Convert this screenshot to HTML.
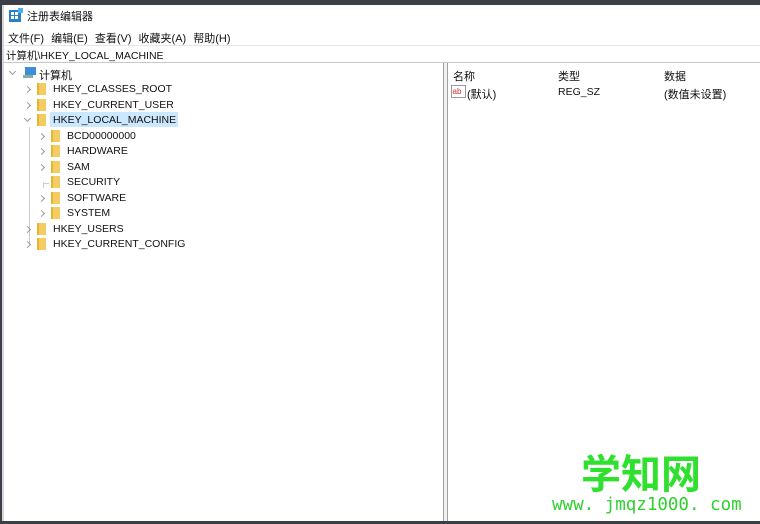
<!DOCTYPE html>
<html><head><meta charset="utf-8"><style>
*{margin:0;padding:0;box-sizing:border-box}
body{width:760px;height:524px;overflow:hidden;background:#fff;position:relative;font-family:"Liberation Sans","Noto Sans CJK SC",sans-serif;font-size:11px;color:#111}
.a{position:absolute;white-space:nowrap}
.tx{font-size:10.5px;letter-spacing:0}
.fold{position:absolute;width:9px;height:12px;background:#f3cd62;border-left:2px solid #e8b532}
.chev{position:absolute;width:5px;height:5px;border-right:1px solid #999;border-bottom:1px solid #999}
.r{transform:rotate(-45deg)}
.d{transform:rotate(45deg)}
</style></head><body>
<div class="a" style="left:0;top:0;width:760px;height:5px;background:#3c4046"></div>
<div class="a" style="left:0;top:0;width:2px;height:524px;background:#3c4046"></div>
<div class="a" style="left:2px;top:5px;width:2px;height:516px;background:#d6d6d6"></div>
<div class="a" style="left:0;top:521px;width:760px;height:3px;background:#3c4046"></div>
<svg class="a" style="left:9px;top:8px" width="14" height="14"><rect x="0" y="2" width="12" height="12" fill="#2a7fc9"/><g fill="#fff"><rect x="2" y="4" width="3" height="3"/><rect x="6" y="4" width="3" height="3"/><rect x="2" y="8" width="3" height="3"/><rect x="6" y="8" width="3" height="3"/></g><rect x="9" y="0" width="5" height="5" fill="#4ab0f0"/></svg>
<div class="a" style="left:27px;top:8px;font-size:11px">注册表编辑器</div>
<div class="a" style="left:8px;top:30px;word-spacing:4px">文件(F) 编辑(E) 查看(V) 收藏夹(A) 帮助(H)</div>
<div class="a" style="left:4px;top:45px;width:756px;height:1px;background:#e6e6e6"></div>
<div class="a tx" style="left:6px;top:48px">计算机\HKEY_LOCAL_MACHINE</div>
<div class="a" style="left:4px;top:62px;width:756px;height:1px;background:#c8c8c8"></div>
<div class="a" style="left:443px;top:63px;width:1px;height:458px;background:#a0a0a0"></div>
<div class="a" style="left:447px;top:63px;width:1px;height:458px;background:#a0a0a0"></div>
<div class="a" style="left:444px;top:63px;width:3px;height:458px;background:#f0f0f0"></div>
<div class="chev d" style="left:10px;top:69px"></div>
<svg class="a" style="left:23px;top:67px" width="14" height="12"><rect x="2" y="0" width="11" height="8" fill="#3b8fd6"/><rect x="0" y="8" width="10" height="3" fill="#8aa"/></svg>
<div class="a" style="left:39px;top:67px">计算机</div>
<div class="a" style="left:50px;top:112px;width:128px;height:15px;background:#cce8ff"></div>
<div class="a" style="left:29px;top:127px;width:1px;height:116px;background:#ccc"></div>
<div class="a" style="left:43px;top:182px;width:1px;height:6px;background:#ccc"></div>
<div class="a" style="left:44px;top:183px;width:5px;height:1px;background:#ccc"></div>
<div id="t"></div>
<script>
var rows=[[1,'HKEY_CLASSES_ROOT',1],[1,'HKEY_CURRENT_USER',1],[1,'HKEY_LOCAL_MACHINE',2],[2,'BCD00000000',1],[2,'HARDWARE',1],[2,'SAM',1],[2,'SECURITY',0],[2,'SOFTWARE',1],[2,'SYSTEM',1],[1,'HKEY_USERS',1],[1,'HKEY_CURRENT_CONFIG',1]];
var h='';rows.forEach(function(r,i){var y=83+i*15.5;var lx=r[0]==1?25:39;var fx=r[0]==1?37:51;var tx=r[0]==1?53:67;
if(r[2]==1)h+='<div class="chev r" style="left:'+lx+'px;top:'+(y+4)+'px"></div>';
if(r[2]==2)h+='<div class="chev d" style="left:'+(lx)+'px;top:'+(y+2)+'px"></div>';
h+='<div class="fold" style="left:'+fx+'px;top:'+(y)+'px"></div><div class="a tx" style="left:'+tx+'px;top:'+y+'px">'+r[1]+'</div>';});
document.getElementById('t').innerHTML=h;
</script>
<div class="a" style="left:453px;top:68px">名称</div>
<div class="a" style="left:558px;top:68px">类型</div>
<div class="a" style="left:664px;top:68px">数据</div>
<svg class="a" style="left:451px;top:85px" width="15" height="13"><rect x="0.5" y="0.5" width="14" height="12" fill="#fff" stroke="#999"/><text x="1.5" y="9" font-size="8" fill="#d03030" font-family="Liberation Sans">ab</text></svg>
<div class="a" style="left:467px;top:86px">(默认)</div>
<div class="a tx" style="left:558px;top:86px">REG_SZ</div>
<div class="a" style="left:664px;top:86px">(数值未设置)</div>
<div class="a" style="left:581px;top:448px;font-size:40px;font-weight:bold;color:#2fe02f;font-family:'Noto Sans CJK SC',sans-serif;line-height:46px">学知网</div>
<div class="a" style="left:552px;top:495px;font-size:17.5px;color:#2fd02f;font-family:'DejaVu Sans Mono',monospace">www. jmqz1000. com</div>
</body></html>
